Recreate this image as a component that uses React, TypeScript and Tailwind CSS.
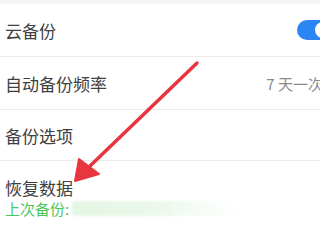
import React from 'react';

const font = { fontFamily: '"Noto Sans CJK SC", "Noto Sans", sans-serif' };

function Row({ children, className = '' }: { children: React.ReactNode; className?: string }) {
  return (
    <div className={`flex items-center justify-between pl-[5px] border-b border-[#ebebeb] ${className}`}>
      {children}
    </div>
  );
}

export default function App() {
  return (
    <div className="relative w-[320px] h-[240px] overflow-hidden bg-white" style={font}>
      {/* top band */}
      <div className="h-[4px] bg-[#f4f4f4]" />

      <Row className="h-[53px]">
        <span className="text-[17px] text-[#404040] leading-none">云备份</span>
        <div className="relative w-[46px] h-[20px] mr-[-23px] rounded-full bg-[#2b86f4]">
          <div className="absolute left-[18px] top-[2px] w-[16px] h-[16px] rounded-full bg-white" />
        </div>
      </Row>

      <Row className="h-[53px]">
        <span className="text-[17px] text-[#404040] leading-none">自动备份频率</span>
        <span className="text-[15px] text-[#8a8a8a] leading-none whitespace-nowrap mr-[-3px]">7 天一次</span>
      </Row>

      <Row className="h-[51px]">
        <span className="text-[17px] text-[#404040] leading-none">备份选项</span>
      </Row>

      <div className="pl-[5px] pt-[18px]">
        <div className="text-[17px] text-[#404040] leading-none">恢复数据</div>
        <div className="flex items-center mt-[5px]">
          <span className="text-[15px] text-[#4cc55a] leading-none">上次备份:</span>
          <div className="ml-[3px] w-[164px] h-[15px] rounded-sm bg-gradient-to-r from-[#e4f6e4] via-[#ebf8eb] to-transparent blur-[1px]" />
        </div>
      </div>

      {/* red annotation arrow */}
      <svg className="absolute left-0 top-0" width="320" height="240" viewBox="0 0 320 240">
        <line x1="197" y1="63" x2="90" y2="166" stroke="#e8363e" strokeWidth="3.5" strokeLinecap="round" />
        <polygon points="75,181 79,159 99,174" fill="#e8363e" stroke="#e8363e" strokeWidth="2" strokeLinejoin="round" />
      </svg>
    </div>
  );
}
